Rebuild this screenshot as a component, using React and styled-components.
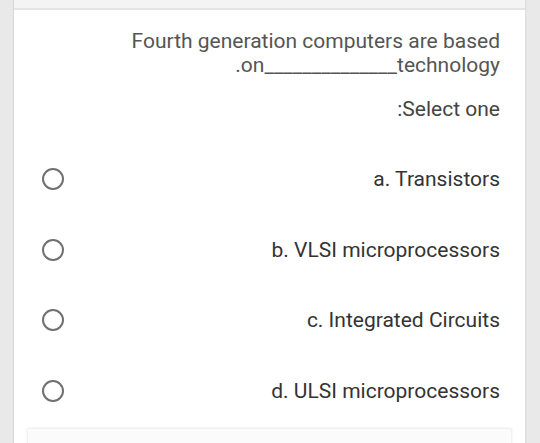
import styled, { createGlobalStyle } from "styled-components";

const GlobalStyle = createGlobalStyle`
    html, body {
        margin: 0;
        padding: 0;
        background: #e9e9e9;
        font-family: Roboto, "Noto Sans", Arial, sans-serif;
    }
`;

const options = [
    "a. Transistors",
    "b. VLSI microprocessors",
    "c. Integrated Circuits",
    "d. ULSI microprocessors",
];

const App = () => {
    return (
        <>
            <GlobalStyle />
            <Page>
                <Card>
                    <TopStrip />
                    <Body>
                        <Question dir="rtl">
                            <span dir="ltr">Fourth generation computers are based</span>
                            <br />
                            on______________technology.
                        </Question>
                        <Prompt dir="rtl">Select one:</Prompt>
                        <Options>
                            {options.map((opt) => (
                                <Option key={opt}>
                                    <Radio />
                                    <Label>{opt}</Label>
                                </Option>
                            ))}
                        </Options>
                    </Body>
                    <Footer />
                </Card>
            </Page>
        </>
    );
};

const Page = styled.div`
    width: 540px;
    height: 443px;
    overflow: hidden;
    padding-left: 14px;
    padding-right: 15px;
    box-sizing: border-box;
`;

const Card = styled.section`
    background: #fff;
    box-shadow: -1px 0 1px #d8d8d8, 1px 0 1px #dcdcdc;
    height: 100%;
`;

const TopStrip = styled.div`
    height: 8px;
    background: #f4f4f4;
    border-bottom: 2px solid #e4e4e4;
`;

const Body = styled.div`
    padding: 19px 25px 0 28px;
`;

const Question = styled.p`
    margin: 0;
    font-size: 21px;
    line-height: 24px;
    color: #555;
    text-align: right;
`;

const Prompt = styled.p`
    margin: 20px 0 0;
    font-size: 21px;
    line-height: 24px;
    color: #444;
    text-align: right;
`;

const Options = styled.div`
    margin-top: 23px;
    display: flex;
    flex-direction: column;
`;

const Option = styled.div`
    height: 70.5px;
    display: flex;
    align-items: center;
    justify-content: space-between;
`;

const Radio = styled.span`
    width: 18px;
    height: 18px;
    border: 2.5px solid #707070;
    border-radius: 50%;
    flex-shrink: 0;
`;

const Label = styled.span`
    font-size: 21px;
    color: #333;
`;

const Footer = styled.div`
    margin: 2px 13px 0;
    height: 24px;
    background: #fbfbfb;
    border: 1px solid #f1f1f1;
    border-radius: 2px;
    box-shadow: 0 0 3px #ececec;
`;

export default App;
